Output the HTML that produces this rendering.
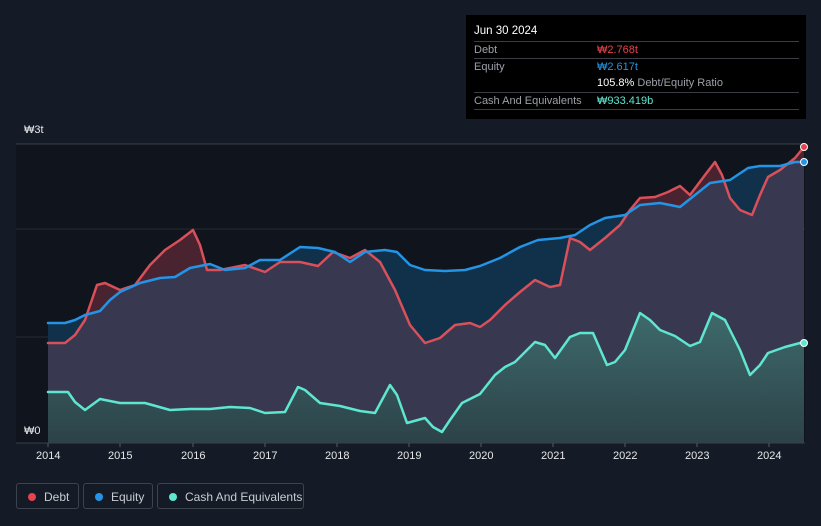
<!DOCTYPE html>
<html><head><meta charset="utf-8"><style>
body{margin:0;width:821px;height:526px;background:#151b26;font-family:"Liberation Sans","Noto Sans CJK KR",sans-serif;overflow:hidden;position:relative}
.tt{position:absolute;left:466px;top:15px;width:340px;height:104px;background:#000;color:#fff;font-size:11px}
.tt .h{position:absolute;left:8px;top:10px;font-size:11.5px}
.row{position:absolute;left:8px;width:325px;border-top:1px solid #3a3d44;height:17px;line-height:17px;color:#9ba0a8}
.row span{position:absolute;left:123px}
.leg{position:absolute;top:483px;height:26px;border:1px solid #3d434d;border-radius:3px;color:#c8ccd2;font-size:12px;line-height:26px;box-sizing:border-box}
.leg i{position:absolute;left:11px;top:9px;width:8px;height:8px;border-radius:50%}
.leg b{font-weight:normal;position:absolute;left:27px}
.ax{position:absolute;top:450px;color:#e6e8ea;font-size:11px}
</style></head><body>
<svg width="821" height="526" style="position:absolute;left:0;top:0">
<defs>
<clipPath id="eq"><path d="M48,323 L65,323 75,320 85,315 100,311 110,300 120,292 140,283 160,278 175,277 190,268 210,264 225,270 245,268 260,260 280,260 300,247 318,248 335,252 350,262 365,252 385,250 397,252 410,265 425,270 445,271 465,270 480,266 500,258 520,247 538,240 560,238 575,235 590,225 605,218 625,215 640,205 660,203 680,207 695,195 710,183 730,180 748,168 760,166 780,166 795,162 804,162 L804,443 48,443Z"/></clipPath>
<linearGradient id="cg" x1="0" y1="0" x2="0" y2="1"><stop offset="0" stop-color="#3e6a6c"/><stop offset="1" stop-color="#2c4248"/></linearGradient>
</defs>
<rect x="16" y="144" width="789" height="299" fill="#10141c"/>
<line x1="16" y1="144" x2="805" y2="144" stroke="#3a3f48"/>
<line x1="16" y1="229" x2="805" y2="229" stroke="#262b34"/>
<line x1="16" y1="337" x2="805" y2="337" stroke="#262b34"/>
<path id="dA" d="M48,343 L65,343 75,335 85,320 97,285 105,283 120,290 135,285 150,265 165,250 180,240 193,230 200,245 207,270 220,270 245,265 265,272 280,262 300,262 318,266 333,252 350,258 365,250 380,262 395,290 410,325 425,343 440,338 455,325 470,323 480,327 490,320 505,305 520,292 535,280 550,287 560,285 570,238 580,242 590,250 605,238 620,225 630,210 640,198 655,197 668,192 680,186 690,195 705,175 715,162 722,175 730,198 740,210 752,215 760,195 768,177 780,170 795,158 804,147 L804,443 48,443Z" fill="#4a2330"/>
<path clip-path="url(#eq)" d="M0,0H821V526H0Z" fill="#11304a"/>
<path clip-path="url(#eq)" d="M48,343 L65,343 75,335 85,320 97,285 105,283 120,290 135,285 150,265 165,250 180,240 193,230 200,245 207,270 220,270 245,265 265,272 280,262 300,262 318,266 333,252 350,258 365,250 380,262 395,290 410,325 425,343 440,338 455,325 470,323 480,327 490,320 505,305 520,292 535,280 550,287 560,285 570,238 580,242 590,250 605,238 620,225 630,210 640,198 655,197 668,192 680,186 690,195 705,175 715,162 722,175 730,198 740,210 752,215 760,195 768,177 780,170 795,158 804,147 L804,443 48,443Z" fill="#383850"/>
<path d="M48,392 L68,392 75,402 85,410 100,399 120,403 145,403 170,410 190,409 210,409 230,407 250,408 265,413 285,412 298,387 305,390 320,403 340,406 360,411 375,413 390,385 397,395 407,423 425,418 433,427 442,432 450,420 462,403 480,394 495,375 505,367 515,362 525,352 535,342 545,345 555,358 570,337 580,333 593,333 607,365 615,362 625,350 640,313 650,320 660,330 675,336 690,346 700,342 712,313 725,320 740,350 750,375 760,365 768,353 785,347 800,343 804,343 L804,443 48,443Z" fill="url(#cg)"/>
<g fill="none" stroke-width="2.5" stroke-linejoin="round" stroke-linecap="round">
<polyline stroke="#d9505a" points="48,343 65,343 75,335 85,320 97,285 105,283 120,290 135,285 150,265 165,250 180,240 193,230 200,245 207,270 220,270 245,265 265,272 280,262 300,262 318,266 333,252 350,258 365,250 380,262 395,290 410,325 425,343 440,338 455,325 470,323 480,327 490,320 505,305 520,292 535,280 550,287 560,285 570,238 580,242 590,250 605,238 620,225 630,210 640,198 655,197 668,192 680,186 690,195 705,175 715,162 722,175 730,198 740,210 752,215 760,195 768,177 780,170 795,158 804,147"/>
<polyline stroke="#2394e6" points="48,323 65,323 75,320 85,315 100,311 110,300 120,292 140,283 160,278 175,277 190,268 210,264 225,270 245,268 260,260 280,260 300,247 318,248 335,252 350,262 365,252 385,250 397,252 410,265 425,270 445,271 465,270 480,266 500,258 520,247 538,240 560,238 575,235 590,225 605,218 625,215 640,205 660,203 680,207 695,195 710,183 730,180 748,168 760,166 780,166 795,162 804,162"/>
<polyline stroke="#5ee6cf" points="48,392 68,392 75,402 85,410 100,399 120,403 145,403 170,410 190,409 210,409 230,407 250,408 265,413 285,412 298,387 305,390 320,403 340,406 360,411 375,413 390,385 397,395 407,423 425,418 433,427 442,432 450,420 462,403 480,394 495,375 505,367 515,362 525,352 535,342 545,345 555,358 570,337 580,333 593,333 607,365 615,362 625,350 640,313 650,320 660,330 675,336 690,346 700,342 712,313 725,320 740,350 750,375 760,365 768,353 785,347 800,343 804,343"/>
</g>
<circle cx="804" cy="147" r="3.5" fill="#e5434f" stroke="#fff" stroke-width="1"/>
<circle cx="804" cy="162" r="3.5" fill="#2394e6" stroke="#fff" stroke-width="1"/>
<circle cx="804" cy="343" r="3.5" fill="#5ee6cf" stroke="#fff" stroke-width="1"/>
<line x1="16" y1="443" x2="805" y2="443" stroke="#3a3f48"/>
<g stroke="#555b66"><line x1="48" y1="443" x2="48" y2="447"/><line x1="120" y1="443" x2="120" y2="447"/><line x1="193" y1="443" x2="193" y2="447"/><line x1="265" y1="443" x2="265" y2="447"/><line x1="337" y1="443" x2="337" y2="447"/><line x1="409" y1="443" x2="409" y2="447"/><line x1="481" y1="443" x2="481" y2="447"/><line x1="553" y1="443" x2="553" y2="447"/><line x1="625" y1="443" x2="625" y2="447"/><line x1="697" y1="443" x2="697" y2="447"/><line x1="769" y1="443" x2="769" y2="447"/></g>
</svg>
<div style="position:absolute;left:24px;top:124px;color:#e6e8ea;font-size:11px">₩3t</div>
<div style="position:absolute;left:24px;top:425px;color:#e6e8ea;font-size:11px">₩0</div>
<div class="ax" style="left:36px">2014</div><div class="ax" style="left:108px">2015</div><div class="ax" style="left:181px">2016</div><div class="ax" style="left:253px">2017</div><div class="ax" style="left:325px">2018</div><div class="ax" style="left:397px">2019</div><div class="ax" style="left:469px">2020</div><div class="ax" style="left:541px">2021</div><div class="ax" style="left:613px">2022</div><div class="ax" style="left:685px">2023</div><div class="ax" style="left:757px">2024</div>
<div class="tt">
<div class="h">Jun 30 2024</div>
<div class="row" style="top:26px">Debt<span style="color:#e5434f">₩2.768t</span></div>
<div class="row" style="top:43px">Equity<span style="color:#2394e6">₩2.617t</span></div>
<div class="row" style="top:60px;border-top:none"><span style="color:#fff">105.8% <em style="font-style:normal;color:#9ba0a8">Debt/Equity Ratio</em></span></div>
<div class="row" style="top:77px">Cash And Equivalents<span style="color:#5ee6cf">₩933.419b</span></div>
<div class="row" style="top:94px;height:0"></div>
</div>
<div class="leg" style="left:16px;width:63px"><i style="background:#e5434f"></i><b>Debt</b></div>
<div class="leg" style="left:83px;width:70px"><i style="background:#2394e6"></i><b>Equity</b></div>
<div class="leg" style="left:157px;width:147px"><i style="background:#5ee6cf"></i><b>Cash And Equivalents</b></div>
</body></html>
